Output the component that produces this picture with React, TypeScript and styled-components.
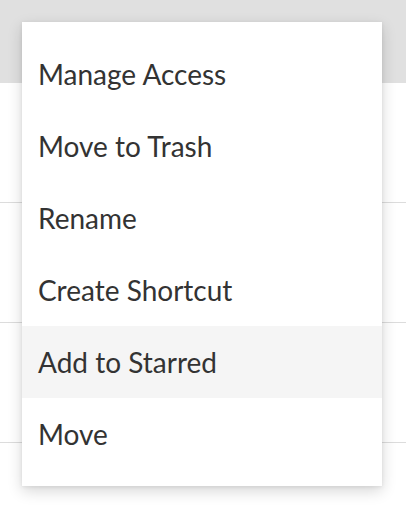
import React from "react";
import styled, { createGlobalStyle } from "styled-components";

const Global = createGlobalStyle`
  html, body { margin: 0; padding: 0; background: #fff; }
  body { font-family: Lato, "Noto Sans", sans-serif; }
`;

const Page = styled.div`
  position: relative;
  width: 406px;
  height: 510px;
  overflow: hidden;
  background: #fff;
`;

const Header = styled.div`
  height: 83px;
  background: #e0e0e0;
`;

const Row = styled.div`
  height: 119px;
  border-bottom: 1px solid #dcdcdc;
`;

const Menu = styled.ul`
  position: absolute;
  top: 22px;
  left: 22px;
  width: 360px;
  margin: 0;
  padding: 16px 0;
  list-style: none;
  background: #fff;
  box-shadow: 0 5px 14px rgba(0, 0, 0, 0.16), 0 1px 4px rgba(0, 0, 0, 0.08);
`;

const Item = styled.li<{ $active?: boolean }>`
  height: 72px;
  display: flex;
  align-items: center;
  padding: 0 16px;
  font-family: Lato, "Noto Sans", sans-serif;
  font-size: 28px;
  color: #333;
  background: ${(p) => (p.$active ? "#f5f5f5" : "transparent")};
`;

const items = [
  "Manage Access",
  "Move to Trash",
  "Rename",
  "Create Shortcut",
  "Add to Starred",
  "Move",
];

export default function App() {
  return (
    <>
      <Global />
      <Page>
        <Header />
        <Row />
        <Row />
        <Row />
        <Row />
        <Menu>
          {items.map((t) => (
            <Item key={t} $active={t === "Add to Starred"}>
              {t}
            </Item>
          ))}
        </Menu>
      </Page>
    </>
  );
}
